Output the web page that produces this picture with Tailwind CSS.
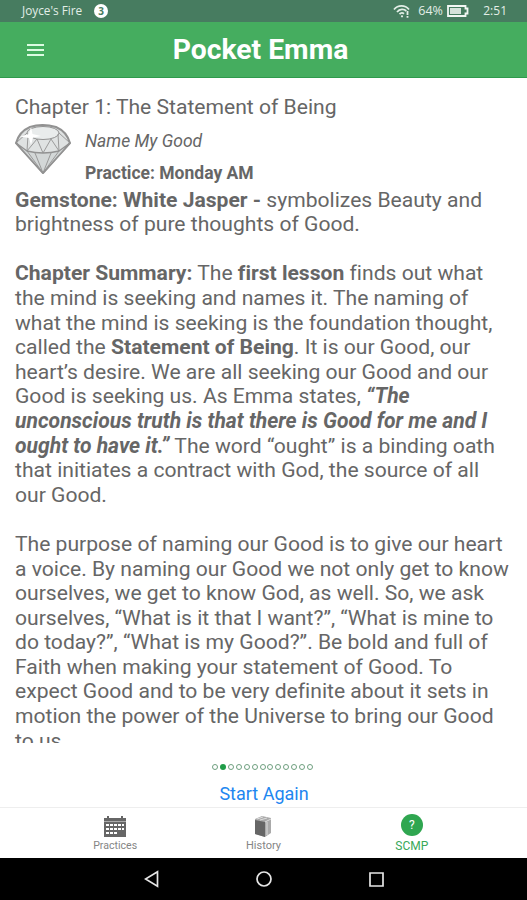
<!DOCTYPE html>
<html lang="en">
<head>
    <meta charset="UTF-8">
    <meta name="viewport" content="width=device-width, initial-scale=1.0">
    <title>Pocket Emma</title>
    <script src="https://cdn.jsdelivr.net/npm/@tailwindcss/browser@4"></script>
</head>
<body class="bg-white">

    <div class="flex flex-col w-[527px] h-[900px] overflow-hidden font-['Roboto',sans-serif] text-[#666]">

        <!-- Status bar -->
        <div class="flex items-center h-[22px] shrink-0 bg-[#477c60] pl-[22px] pr-5 text-[#e3eee7] font-['Open_Sans',sans-serif] text-[11.800px] leading-none">
            <span class="w-[62px] whitespace-nowrap">Joyce's Fire</span>
            <span class="ml-[10px] flex items-center justify-center size-3.5 rounded-full bg-white text-[#477c60] text-[10px] font-bold">3</span>
            <svg class="ml-auto" width="18" height="15" viewBox="0 0 18 15" fill="none" stroke="#e3eee7" stroke-width="1.800">
                <path d="M1 5.500C5 .7 12 .7 16 5.500"/>
                <path d="M4 8C6.800 4.700 11 4.700 13.300 7"/>
                <path d="M6.500 10.200C8 8.500 9.500 8.500 11 9.800"/>
                <circle cx="9" cy="12.300" r="1.100" fill="#e3eee7" stroke="none"/>
                <path d="M14.500 7v4M14.500 12v1.700"/>
            </svg>
            <span class="ml-[7px] w-[26px] text-[12.500px] whitespace-nowrap">64%</span>
            <svg class="ml-[3px]" width="22" height="12" viewBox="0 0 22 12">
                <path d="M1 1h17.500v2.500h2v5h-2V11H1z" fill="none" stroke="#f2f7f4" stroke-width="1.800"/>
                <path d="M3 3h11v6H3z" fill="#d5e2da"/>
            </svg>
            <span class="ml-[14px] text-[12px]">2:51</span>
        </div>

        <!-- Header -->
        <div class="grid grid-cols-[60px_1fr_66px] items-center h-14 shrink-0 bg-[#45ad5f] border-b border-[#2f9a4c]">
            <svg class="ml-[27px]" width="17" height="12" viewBox="0 0 17 12" fill="#dcfbe2">
                <path d="M0 0h17v2H0zM0 5h17v2H0zM0 10h17v2H0z"/>
            </svg>
            <h1 class="text-center text-white font-bold text-[28.300px] leading-none pt-[2px] whitespace-nowrap">Pocket Emma</h1>
        </div>

        <!-- Chapter -->
        <div class="h-[665px] shrink-0 overflow-hidden pl-[15px] pt-[17px] text-[21.100px] leading-[24.600px] whitespace-nowrap [font-variant-ligatures:none]">
            <h2>Chapter 1: The Statement of Being</h2>
            <div class="flex h-[68px]">
                <svg class="mt-[4px] shrink-0" width="56" height="51" viewBox="0 0 56 51" stroke="#929292" stroke-linejoin="round">
                    <path d="M1 19C3 12 8 6 15 3Q27-1 41 3C48 6 53 12 55 19L28 49z" fill="#dfe2e2" stroke-width="2"/>
                    <path d="M1 19L12 27Q28 31 44 27L55 19L28 49z" fill="#d3d7d7" stroke-width="1.300"/>
                    <ellipse cx="28" cy="9" rx="16" ry="6.500" fill="#e9ecec" stroke-width="1"/>
                    <path d="M12 9L1 19M13 11l-1 16M22 15l-10 12M22 15l6 14M36 15l-8 14M36 15l8 12M43 10l1 17M44 9l11 10M12 27l16 22 16-22M20 29l8 20 8-20" fill="none" stroke-width=".9"/>
                    <path d="M16 3l1.500 7L26 12l-8 1.500L16 21l-2-7-9-1.500 9-2.500z" fill="#fff" stroke="none"/>
                </svg>
                <div class="ml-[14px] text-[17.500px] leading-5">
                    <p class="mt-[11px] italic">Name My Good</p>
                    <p class="mt-3 font-bold">Practice: Monday AM</p>
                </div>
            </div>
            <p>
                <b>Gemstone: White Jasper -</b> symbolizes Beauty and<br>
                brightness of pure thoughts of Good.
            </p>
            <br>
            <p>
                <b>Chapter Summary:</b> The <b>first lesson</b> finds out what<br>
                the mind is seeking and names it. The naming of<br>
                what the mind is seeking is the foundation thought,<br>
                called the <b>Statement of Being</b>. It is our Good, our<br>
                heart’s desire. We are all seeking our Good and our<br>
                Good is seeking us. As Emma states, <b><i>“The</i></b><br>
                <b><i>unconscious truth is that there is Good for me and I</i></b><br>
                <b><i>ought to have it.”</i></b> The word “ought” is a binding oath<br>
                that initiates a contract with God, the source of all<br>
                our Good.
            </p>
            <br>
            <p>
                The purpose of naming our Good is to give our heart<br>
                a voice. By naming our Good we not only get to know<br>
                ourselves, we get to know God, as well. So, we ask<br>
                ourselves, “What is it that I want?”, “What is mine to<br>
                do today?”, “What is my Good?”. Be bold and full of<br>
                Faith when making your statement of Good. To<br>
                expect Good and to be very definite about it sets in<br>
                motion the power of the Universe to bring our Good<br>
                to us.
            </p>
        </div>

        <!-- Page dots -->
        <div class="flex justify-center gap-[1.900px] mt-[21px] pr-[2px] shrink-0">
            <i class="size-[6px] rounded-full border border-[#6fa080]"></i>
            <i class="size-[6px] rounded-full bg-[#1f9d48]"></i>
            <i class="size-[6px] rounded-full border border-[#6fa080]"></i>
            <i class="size-[6px] rounded-full border border-[#6fa080]"></i>
            <i class="size-[6px] rounded-full border border-[#6fa080]"></i>
            <i class="size-[6px] rounded-full border border-[#6fa080]"></i>
            <i class="size-[6px] rounded-full border border-[#6fa080]"></i>
            <i class="size-[6px] rounded-full border border-[#6fa080]"></i>
            <i class="size-[6px] rounded-full border border-[#6fa080]"></i>
            <i class="size-[6px] rounded-full border border-[#6fa080]"></i>
            <i class="size-[6px] rounded-full border border-[#6fa080]"></i>
            <i class="size-[6px] rounded-full border border-[#6fa080]"></i>
            <i class="size-[6px] rounded-full border border-[#6fa080]"></i>
        </div>
        <a class="block mt-3 pl-px shrink-0 text-center text-[#2186f0] text-[18px] leading-6">Start Again</a>

        <!-- Tabs -->
        <div class="mt-auto flex h-[51px] shrink-0 border-t border-[#eee] px-[41px] text-[11px] leading-3 text-[#858585]">
            <div class="flex-1 flex flex-col items-center pt-[8px]">
                <svg width="22" height="21" viewBox="0 0 22 21">
                    <path d="M0 2h22v19H0z" fill="#666"/>
                    <path d="M4 0v4M18 0v4" stroke="#666" stroke-width="2"/>
                    <path d="M0 5.500h22" stroke="#aaa"/>
                    <path d="M2 8h3v2H2zM6 8h3v2H6zM10 8h3v2h-3zM14 8h3v2h-3zM18 8h2v2h-2zM2 12h3v2H2zM6 12h3v2H6zM10 12h3v2h-3zM14 12h3v2h-3zM18 12h2v2h-2zM2 16h3v2H2zM6 16h3v2H6zM10 16h3v2h-3z" fill="#fff"/>
                </svg>
                <span class="mt-[3px] text-[10.600px]">Practices</span>
            </div>
            <div class="flex-1 flex flex-col items-center pt-[8px]">
                <svg width="18" height="21" viewBox="0 0 18 21">
                    <path d="M1 3L8 0l9 2v15l-6 4-10-3z" fill="#aaa"/>
                    <path d="M1 4l10 2v15L1 18z" fill="#666"/>
                    <path d="M3 3l6-2M6 4l7-2M11 6l6-3M13 6v13" stroke="#ddd" fill="none"/>
                </svg>
                <span class="mt-[3px]">History</span>
            </div>
            <div class="flex-1 flex flex-col items-center pt-[6px] text-[#38a859]">
                <span class="flex items-center justify-center size-[22px] rounded-full bg-[#2fa650] text-white text-[12px]">?</span>
                <span class="mt-[4px] text-[12px]">SCMP</span>
            </div>
        </div>

        <!-- Navigation bar -->
        <div class="flex items-center h-[42px] shrink-0 bg-black pl-[144px]">
            <svg width="15" height="18" viewBox="0 0 15 18" fill="none" stroke="#e6e6e6" stroke-width="1.700"><path d="M13.500 1.800v14.400L1.500 9z"/></svg>
            <svg class="ml-[97px]" width="16" height="16" viewBox="0 0 16 16" fill="none" stroke="#e6e6e6" stroke-width="1.700"><circle cx="8" cy="8" r="7"/></svg>
            <svg class="ml-[97px]" width="15" height="15" viewBox="0 0 15 15" fill="none" stroke="#e6e6e6" stroke-width="1.700"><path d="M1 1h13v13H1z"/></svg>
        </div>

    </div>

</body>
</html>
